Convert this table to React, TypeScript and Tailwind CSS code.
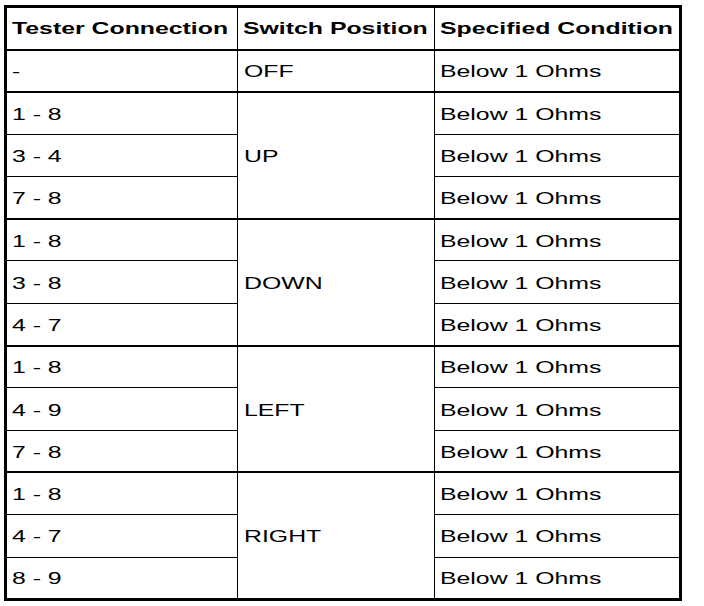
const groups = [
  { position: "OFF", connections: ["-"] },
  { position: "UP", connections: ["1 - 8", "3 - 4", "7 - 8"] },
  { position: "DOWN", connections: ["1 - 8", "3 - 8", "4 - 7"] },
  { position: "LEFT", connections: ["1 - 8", "4 - 9", "7 - 8"] },
  { position: "RIGHT", connections: ["1 - 8", "4 - 7", "8 - 9"] },
];

function Wide({ children }: { children: React.ReactNode }) {
  return <span className="inline-block origin-left scale-x-[1.46] whitespace-nowrap">{children}</span>;
}

export default function App() {
  return (
    <div className="w-[704px] h-[606px] bg-white pl-[4px] pt-[5px] font-['Liberation_Sans',Arial,sans-serif] text-black">
      <table className="w-[678px] border-collapse border-[3px] border-black text-[17px] leading-none">
        <thead>
          <tr className="h-[43px] border-b-2 border-black font-bold">
            <th className="w-[232px] border-r border-black pl-[5px] text-left font-bold">
              <Wide>Tester Connection</Wide>
            </th>
            <th className="w-[197px] border-r border-black pl-[5px] text-left font-bold">
              <Wide>Switch Position</Wide>
            </th>
            <th className="pl-[5px] text-left font-bold">
              <Wide>Specified Condition</Wide>
            </th>
          </tr>
        </thead>
        <tbody>
          {groups.map((g) =>
            g.connections.map((c, i) => (
              <tr
                key={g.position + i}
                className={
                  i === g.connections.length - 1
                    ? "h-[42.3px] border-b-2 border-black"
                    : "h-[42.3px] border-b border-black"
                }
              >
                <td className="border-r border-black pl-[5px] pt-[2px]">
                  <Wide>{c}</Wide>
                </td>
                {i === 0 && (
                  <td rowSpan={g.connections.length} className="border-r border-b-2 border-black pl-[6px] pt-[2px]">
                    <Wide>{g.position}</Wide>
                  </td>
                )}
                <td className="pl-[5px] pt-[2px]">
                  <Wide>Below 1 Ohms</Wide>
                </td>
              </tr>
            ))
          )}
        </tbody>
      </table>
    </div>
  );
}
